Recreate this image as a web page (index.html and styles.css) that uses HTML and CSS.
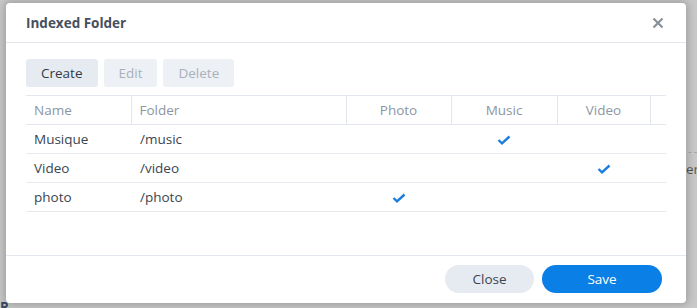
FILE: index.html
```html
<!DOCTYPE html>
<html lang="en">
<head>
    <meta charset="UTF-8">
    <title>Indexed Folder</title>
    <link rel="stylesheet" href="styles.css">
</head>
<body>
    <div class="backdrop">
        <div class="backdrop-rule"></div>
        <span class="backdrop-text">ere</span>
        <span class="backdrop-corner">P</span>
    </div>

    <div class="dialog">
        <div class="dialog-header">
            <h1 class="dialog-title">Indexed Folder</h1>
            <button class="close-x" aria-label="Close">
                <svg width="12" height="12" viewBox="0 0 12 12"><path d="M1.5 1.5 L10.5 10.5 M10.5 1.5 L1.5 10.5" stroke="#8a9099" stroke-width="2.2" fill="none"/></svg>
            </button>
        </div>

        <div class="dialog-body">
            <div class="toolbar">
                <button class="tool-btn">Create</button>
                <button class="tool-btn disabled">Edit</button>
                <button class="tool-btn disabled">Delete</button>
            </div>

            <table class="grid">
                <colgroup>
                    <col class="c-name"><col class="c-folder"><col class="c-photo"><col class="c-music"><col class="c-video"><col class="c-pad">
                </colgroup>
                <thead>
                    <tr>
                        <th>Name</th>
                        <th>Folder</th>
                        <th class="center">Photo</th>
                        <th class="center">Music</th>
                        <th class="center">Video</th>
                        <th class="pad"></th>
                    </tr>
                </thead>
                <tbody>
                    <tr>
                        <td>Musique</td>
                        <td>/music</td>
                        <td class="center"></td>
                        <td class="center"><svg class="check" width="14" height="10" viewBox="0 0 14 10"><polyline points="1.5,5 5,8.3 12.5,1.5"/></svg></td>
                        <td class="center"></td>
                        <td></td>
                    </tr>
                    <tr>
                        <td>Video</td>
                        <td>/video</td>
                        <td class="center"></td>
                        <td class="center"></td>
                        <td class="center"><svg class="check" width="14" height="10" viewBox="0 0 14 10"><polyline points="1.5,5 5,8.3 12.5,1.5"/></svg></td>
                        <td></td>
                    </tr>
                    <tr>
                        <td>photo</td>
                        <td>/photo</td>
                        <td class="center"><svg class="check" width="14" height="10" viewBox="0 0 14 10"><polyline points="1.5,5 5,8.3 12.5,1.5"/></svg></td>
                        <td class="center"></td>
                        <td class="center"></td>
                        <td></td>
                    </tr>
                </tbody>
            </table>
        </div>

        <div class="dialog-footer">
            <button class="pill-btn secondary">Close</button>
            <button class="pill-btn primary">Save</button>
        </div>
    </div>
</body>
</html>
```

FILE: styles.css
```css
* {
    margin: 0;
    padding: 0;
    box-sizing: border-box;
}

body {
    width: 697px;
    height: 308px;
    overflow: hidden;
    position: relative;
    background: #c9c9c9;
    font-family: 'Open Sans', 'Noto Sans', sans-serif;
    font-size: 13.5px;
    color: #3a4450;
}

.backdrop {
    height: 100%;
    position: relative;
}

.backdrop-rule {
    position: absolute;
    top: 152px;
    right: 0;
    width: 14px;
    border-top: 1px dashed #a9a9a9;
}

.backdrop-text {
    position: absolute;
    top: 160px;
    left: 686px;
    color: #555;
}

.backdrop-corner {
    position: absolute;
    top: 298px;
    left: 0;
    font-weight: 700;
    color: #3a4a63;
}

.dialog {
    position: absolute;
    top: 3px;
    left: 6px;
    width: 680px;
    height: 300px;
    background: #fff;
    border-radius: 4px;
    box-shadow: 0 0 8px 2px rgba(0, 0, 0, 0.22);
    display: flex;
    flex-direction: column;
}

.dialog-header {
    height: 40px;
    border-bottom: 1px solid #e2e7ed;
    display: flex;
    align-items: center;
    justify-content: space-between;
    padding: 0 20px;
}

.dialog-title {
    font-size: 13.5px;
    font-weight: 700;
    color: #46505c;
}

.close-x {
    background: none;
    border: none;
    width: 12px;
    height: 12px;
    display: flex;
    margin-right: 2px;
}

.dialog-body {
    flex: 1;
    padding: 16px 20px 0;
}

.toolbar {
    display: flex;
    gap: 6px;
    margin-bottom: 8px;
}

.tool-btn {
    height: 28px;
    padding: 0 15px;
    border: none;
    border-radius: 3px;
    background: #e6ebf2;
    font-family: inherit;
    font-size: 13.5px;
    color: #2f3a46;
}

.tool-btn.disabled {
    background: #edf0f4;
    color: #a9b0ba;
}

.grid {
    width: 640px;
    border-collapse: collapse;
    table-layout: fixed;
    border-top: 1px solid #e2e7ed;
}

.c-name { width: 105px; }
.c-folder { width: 215px; }
.c-photo { width: 105px; }
.c-music { width: 106px; }
.c-video { width: 93px; }
.c-pad { width: 16px; }

.grid th {
    height: 29px;
    font-weight: 400;
    text-align: left;
    color: #8c96a3;
    padding-left: 8px;
    border-left: 1px solid #e2e7ed;
    border-bottom: 1px solid #e2e7ed;
}

.grid th:first-child {
    border-left: none;
}

.grid th.pad {
    border-left: 1px solid #e2e7ed;
}

.grid td {
    height: 29px;
    padding-left: 8px;
    border-bottom: 1px solid #e6eaef;
}

.grid td:nth-child(2) {
    padding-left: 9px;
}

.grid .center {
    text-align: center;
    padding-left: 0;
}

.check {
    display: inline-block;
    vertical-align: -1px;
    fill: none;
    stroke: #1b7de0;
    stroke-width: 2.4;
}

.dialog-footer {
    height: 48px;
    border-top: 1px solid #e2e7ed;
    display: flex;
    justify-content: flex-end;
    align-items: center;
    gap: 8px;
    padding: 0 24px 2px 0;
}

.pill-btn {
    height: 28px;
    border: none;
    border-radius: 14px;
    font-family: inherit;
    font-size: 13.5px;
}

.pill-btn.secondary {
    width: 89px;
    background: #e6ebf2;
    color: #3a4450;
}

.pill-btn.primary {
    width: 120px;
    background: #0a7fe6;
    color: #fff;
}
```
